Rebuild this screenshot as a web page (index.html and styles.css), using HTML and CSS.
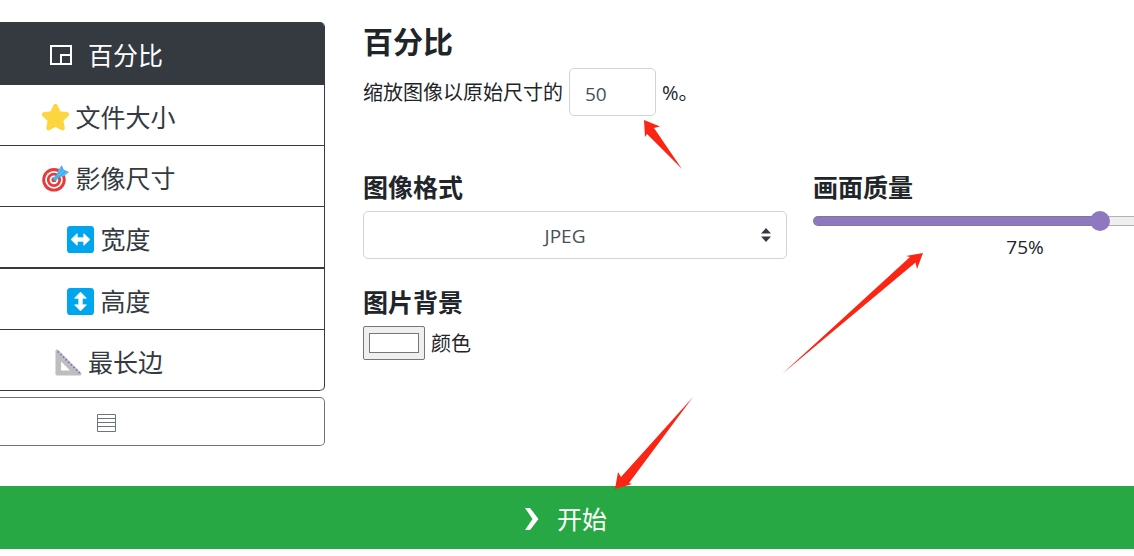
FILE: index.html
```html
<!DOCTYPE html>
<html lang="zh-CN">
<head>
    <meta charset="UTF-8">
    <meta name="viewport" content="width=device-width, initial-scale=1.0">
    <title>百分比</title>
    <link rel="stylesheet" href="styles.css">
</head>
<body>

    <form id="resizeForm">
        <div class="layout">
            <nav class="sidebar">
                <div class="modes">
                    <button type="button" class="mode active">
                        <svg class="icon-box" viewBox="0 0 22 22" fill="none" stroke="currentColor" stroke-width="2"><path d="M1 2h20v18H1zM11 20v-9h10"/></svg>
                        百分比
                    </button>
                    <button type="button" class="mode">
                        <svg class="icon" viewBox="0 0 28 28"><path d="M14 2.5l3.4 7.4 8.1 1-6 5.7 1.6 8.2-7.1-3.9-7.1 3.9 1.6-8.2-6-5.7 8.1-1z" fill="#fdd53f" stroke="#fdd53f" stroke-width="5" stroke-linejoin="round"/></svg>
                        文件大小
                    </button>
                    <button type="button" class="mode">
                        <svg class="icon" viewBox="0 0 28 28">
                            <circle cx="12.4" cy="15.4" r="12.2" fill="#e43b3b"/>
                            <circle cx="12.4" cy="15.4" r="9.2" fill="#fff"/>
                            <circle cx="12.4" cy="15.4" r="7.4" fill="#e43b3b"/>
                            <circle cx="12.4" cy="15.4" r="4.5" fill="#fff"/>
                            <circle cx="12.4" cy="15.4" r="2.6" fill="#e43b3b"/>
                            <path d="M13.600 14.200L20 8" stroke="#38bdf0" stroke-width="4" stroke-linecap="round"/>
                            <path d="M15.500 12.5L16.600 5.6 20.5 0.3 22.6 4.800 28 7.200 22.6 11.6z" fill="#4aa5ef"/>
                            <path d="M17 11.2L22.6 5.4M21 11.4l5-4M17.4 7.4L20 3" stroke="#4ccbf5" stroke-width="1.4"/>
                        </svg>
                        影像尺寸
                    </button>
                    <button type="button" class="mode thick">
                        <svg class="icon" viewBox="0 0 28 28"><rect width="28" height="28" rx="3.5" fill="#00a6ed"/><path d="M4.3 14l6.2-6v4.3h7V8l6.2 6-6.2 6v-4.3h-7V20z" fill="#fff" stroke="#fff" stroke-linejoin="round"/></svg>
                        宽度
                    </button>
                    <button type="button" class="mode">
                        <svg class="icon" viewBox="0 0 28 28"><rect width="28" height="28" rx="3.5" fill="#00a6ed"/><path d="M14 4.3l6 6.2h-4.3v7H20l-6 6.2-6-6.2h4.3v-7H8z" fill="#fff" stroke="#fff" stroke-linejoin="round"/></svg>
                        高度
                    </button>
                    <button type="button" class="mode">
                        <svg class="icon" viewBox="0 0 28 28">
                            <path d="M.5 2.2C.5.8 2.2 0 3.3 1.1L27 24.6c1 1 .4 2.9-1.1 2.9H2c-.9 0-1.5-.6-1.5-1.5zM6.3 13v9.2h9.2z" fill="#bebebe" fill-rule="evenodd"/>
                            <path d="M3 2.6L26.2 25.6" stroke="#8d65c5" stroke-width="2" stroke-dasharray="1.4 2.4"/>
                        </svg>
                        最长边
                    </button>
                </div>
                <button type="button" class="list-button" aria-label="列表">
                    <svg class="icon-list" viewBox="0 0 20 20" fill="none" stroke="#6c757d"><path d="M1.5 1.5h18v17h-18zM1.5 5.5h18M1.5 9.5h18M1.5 13.5h18"/></svg>
                </button>
            </nav>

            <main class="content">
                <h1>百分比</h1>
                <div class="scale-row">
                    <label for="percent">缩放图像以原始尺寸的</label>
                    <input type="number" id="percent" class="percent" value="50">
                    <span>%。</span>
                </div>

                <div class="options">
                    <section>
                        <h2><label for="format">图像格式</label></h2>
                        <div class="select-wrap">
                            <select id="format">
                                <option>JPEG</option>
                            </select>
                            <svg class="select-arrows" viewBox="0 0 10 14" fill="#343a40"><path d="M0 5.5L5 0l5 5.5zM0 8.5L5 14l5-5.5z"/></svg>
                        </div>
                    </section>
                    <section>
                        <h2><label for="quality">画面质量</label></h2>
                        <input type="range" id="quality" class="quality" min="20" max="100" value="75">
                        <output for="quality" id="qualityValue">75%</output>
                    </section>
                    <section>
                        <h2>图片背景</h2>
                        <div class="color-row">
                            <input type="color" id="background" value="#ffffff">
                            <label for="background">颜色</label>
                        </div>
                    </section>
                </div>
            </main>
        </div>

        <button type="button" class="start">
            <svg class="icon-start" viewBox="0 0 14 22" fill="currentColor"><path d="M0 0h5l8.500 11L5 22H0l7.500-11z"/></svg>
            开始
        </button>
    </form>

    <svg class="arrows" viewBox="0 0 1134 556" fill="#fc2413">
        <path d="M644 120l16 6.500-6 1.500 28 41-35-35-2 3z"/>
        <path d="M923 253l-6 16-1.500-6.500L782 374 910 257l-4-1z"/>
        <path d="M615 489l3-17 3 5 72-80-64 86 3 1z"/>
    </svg>

    <script>
        const quality = document.getElementById('quality');

        function showQuality() {
            const part = (quality.value - quality.min) / (quality.max - quality.min);
            quality.style.setProperty('--fill', part * 100 + '%');
            document.getElementById('qualityValue').innerText = quality.value + '%';
        }

        quality.addEventListener('input', showQuality);
        showQuality();
    </script>
</body>
</html>
```
FILE: styles.css
```css
* {
    box-sizing: border-box;
}

body {
    margin: 0;
    position: relative;
    font-family: "Open Sans", "Noto Sans CJK SC", sans-serif;
    font-size: 20px;
    line-height: 30px;
    color: #212529;
    background-color: white;
}

button, input, select {
    font-family: inherit;
    margin: 0;
}

button {
    cursor: pointer;
}

.layout {
    display: flex;
    align-items: flex-start;
    gap: 38px;
    padding-top: 22px;
}

.sidebar {
    flex: 0 0 325px;
}

.modes {
    display: flex;
    flex-direction: column;
    border: 1px solid #343a40;
    border-width: 0 1px 0 0;
    border-radius: 0 5px 5px 0;
    overflow: hidden;
}

.mode {
    display: flex;
    align-items: center;
    justify-content: center;
    gap: 6px;
    padding: 14px 106px 10px 0;
    border: none;
    border-bottom: 1px solid #343a40;
    background-color: white;
    color: #343a40;
    font-size: 25px;
    line-height: 36px;
}

.mode:last-child {
    border-radius: 0 0 5px 0;
}

.mode.active {
    gap: 16px;
    padding: 15px 111px 11px 0;
    background-color: #343a40;
    color: white;
}

.mode.thick {
    border-bottom-width: 2px;
}

.icon {
    width: 27px;
    height: 27px;
}

.icon-box {
    width: 22px;
    height: 22px;
}

.list-button {
    display: flex;
    align-items: center;
    justify-content: center;
    width: 100%;
    height: 49px;
    margin-top: 6px;
    padding: 2px 112px 0 0;
    border: 1px solid #6c757d;
    border-left: none;
    border-radius: 0 5px 5px 0;
    background-color: white;
}

.icon-list {
    width: 20px;
    height: 20px;
}

.content {
    flex: 1;
    min-width: 0;
    overflow: hidden;
}

h1 {
    margin: 0 0 6px;
    font-size: 30px;
    line-height: 40px;
}

h2 {
    margin: 0 0 9px;
    font-size: 25px;
    line-height: 30px;
}

.scale-row {
    display: flex;
    align-items: center;
    gap: 6px;
}

.scale-row label, .scale-row span {
    padding-top: 2px;
}

.percent, select {
    height: 48px;
    border: 1px solid #ced4da;
    border-radius: 5px;
    background-color: white;
    color: #495057;
    font-size: 19px;
}

.percent {
    width: 87px;
    padding: 4px 15px 0;
    appearance: textfield;
}

.percent::-webkit-inner-spin-button {
    appearance: none;
}

.options {
    display: grid;
    grid-template-columns: 55% 55%;
    gap: 24px 26px;
    margin-top: 56px;
}

.select-wrap {
    position: relative;
}

select {
    display: block;
    width: 100%;
    padding: 2px 35px 0 15px;
    appearance: none;
    text-align: center;
    text-align-last: center;
}

.select-arrows {
    position: absolute;
    top: 17px;
    right: 16px;
    width: 10px;
    height: 14px;
    pointer-events: none;
}

.quality {
    display: block;
    width: 100%;
    height: 20px;
    appearance: none;
    background: none;
}

.quality::-webkit-slider-runnable-track {
    height: 10px;
    border: 1px solid rgba(118, 118, 118, 0.5);
    border-radius: 5px;
    background: linear-gradient(to right, #8e79c1 var(--fill), #efefef var(--fill)) border-box;
}

.quality::-webkit-slider-thumb {
    appearance: none;
    width: 20px;
    height: 20px;
    margin-top: -6px;
    border-radius: 50%;
    background-color: #8e79c1;
}

output {
    display: block;
    text-align: center;
    font-size: 19px;
    line-height: 32px;
}

.color-row {
    display: flex;
    align-items: center;
    gap: 6px;
}

.color-row label {
    padding-top: 2px;
}

input[type="color"] {
    width: 62px;
    height: 34px;
    padding: 1px 2px;
    border: 1px solid #767676;
    border-radius: 2px;
    background-color: #efefef;
}

input[type="color"]::-webkit-color-swatch-wrapper {
    padding: 5px 3px;
}

.start {
    display: flex;
    align-items: center;
    justify-content: center;
    gap: 18px;
    width: 100%;
    margin-top: 40px;
    padding: 15px 2px 12px 0;
    border: none;
    background-color: #28a745;
    color: white;
    font-size: 25px;
    line-height: 36px;
}

.icon-start {
    width: 14px;
    height: 22px;
}

.arrows {
    position: absolute;
    top: 0;
    left: 0;
    width: 1134px;
    height: 556px;
    pointer-events: none;
}
```
